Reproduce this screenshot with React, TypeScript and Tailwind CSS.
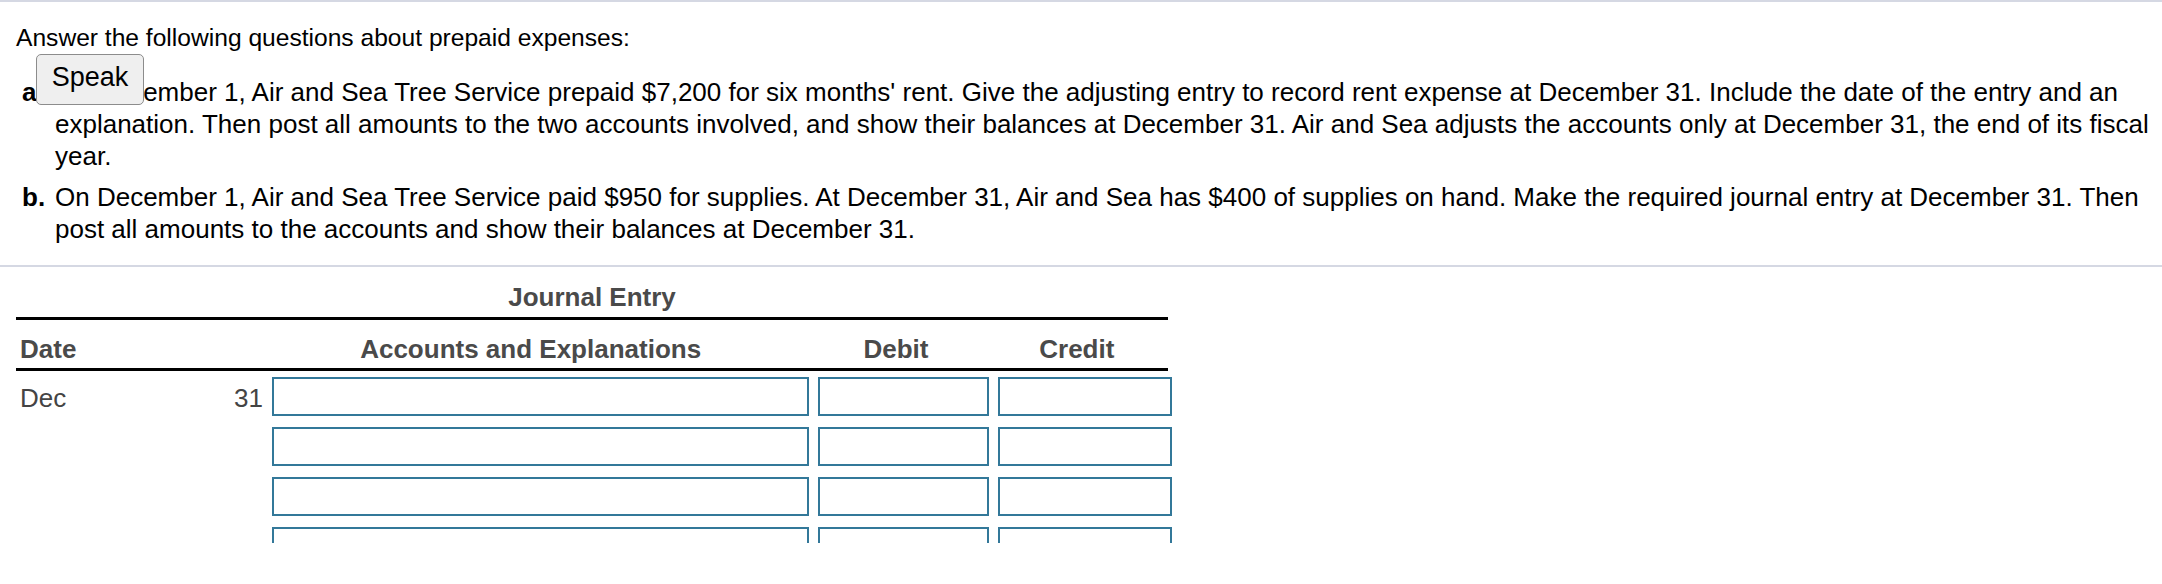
import React from "react";

const FONT = "font-['Liberation_Sans',Arial,Helvetica,sans-serif]";

function EntryRow({ date, day }: { date?: string; day?: string }) {
  return (
    <div className="flex items-start gap-[9px]">
      <div className="flex w-[247px] justify-between pl-[4px] pt-[5px] text-[#444]">
        <span>{date}</span>
        <span>{day}</span>
      </div>
      <input
        type="text"
        className="h-[39px] w-[537px] border-[2.5px] border-[#337899] bg-white outline-none"
      />
      <input
        type="text"
        className="h-[39px] w-[171px] border-[2.5px] border-[#337899] bg-white outline-none"
      />
      <input
        type="text"
        className="h-[39px] w-[174px] border-[2.5px] border-[#337899] bg-white outline-none"
      />
    </div>
  );
}

function JournalTable() {
  return (
    <div className="ml-4 mt-[14px] w-[1152px]">
      <div className="text-center font-bold text-[#4a4a4a]">Journal Entry</div>
      <div className="mt-[4px] h-[3px] bg-black" />
      <div className="mt-[13px] flex gap-[9px] font-bold text-[#4a4a4a]">
        <div className="w-[247px] pl-[4px]">Date</div>
        <div className="w-[537px] pr-[16px] text-center">Accounts and Explanations</div>
        <div className="w-[171px] pr-[9px] text-center">Debit</div>
        <div className="w-[174px] pr-[9px] text-center">Credit</div>
      </div>
      <div className="mt-[3px] h-[3px] bg-black" />
      <div className="flex h-[172px] w-[1160px] flex-col gap-[11px] overflow-hidden pt-[6px]">
        <EntryRow date="Dec" day="31" />
        <EntryRow />
        <EntryRow />
        <EntryRow />
      </div>
    </div>
  );
}

export default function App() {
  return (
    <div
      className={`relative min-h-[584px] w-[2162px] border-t-2 border-[#d5d8e3] bg-white text-[26px] leading-[32px] text-black ${FONT}`}
    >
      <div className="pl-4 pr-2 pt-[20px]">
        <p className="text-[24.6px]">Answer the following questions about prepaid expenses:</p>
        <ol className="mt-[22px] flex flex-col gap-[9px]">
          <li className="flex">
            <span className="w-[39px] shrink-0 pl-[6px] font-bold">a.</span>
            <span className="whitespace-nowrap">
              On December 1, Air and Sea Tree Service prepaid $7,200 for six months' rent. Give the
              adjusting entry to record rent expense at December 31. Include the date of the entry and an
              <br />
              explanation. Then post all amounts to the two accounts involved, and show their balances at
              December 31. Air and Sea adjusts the accounts only at December 31, the end of its fiscal
              <br />
              year.
            </span>
          </li>
          <li className="flex">
            <span className="w-[39px] shrink-0 pl-[6px] font-bold">b.</span>
            <span className="whitespace-nowrap">
              On December 1, Air and Sea Tree Service paid $950 for supplies. At December 31, Air and Sea
              has $400 of supplies on hand. Make the required journal entry at December 31. Then
              <br />
              post all amounts to the accounts and show their balances at December 31.
            </span>
          </li>
        </ol>
      </div>
      <div className="mt-[20px] h-[2px] bg-[#d5d8e3]" />
      <JournalTable />
      <button
        type="button"
        className="absolute left-[36px] top-[52px] h-[51px] w-[108px] rounded-[5px] border-[1.5px] border-[#8c8c8c] bg-[#efefef] pb-[6px] text-[27px] leading-[32px] text-black"
      >
        Speak
      </button>
    </div>
  );
}
